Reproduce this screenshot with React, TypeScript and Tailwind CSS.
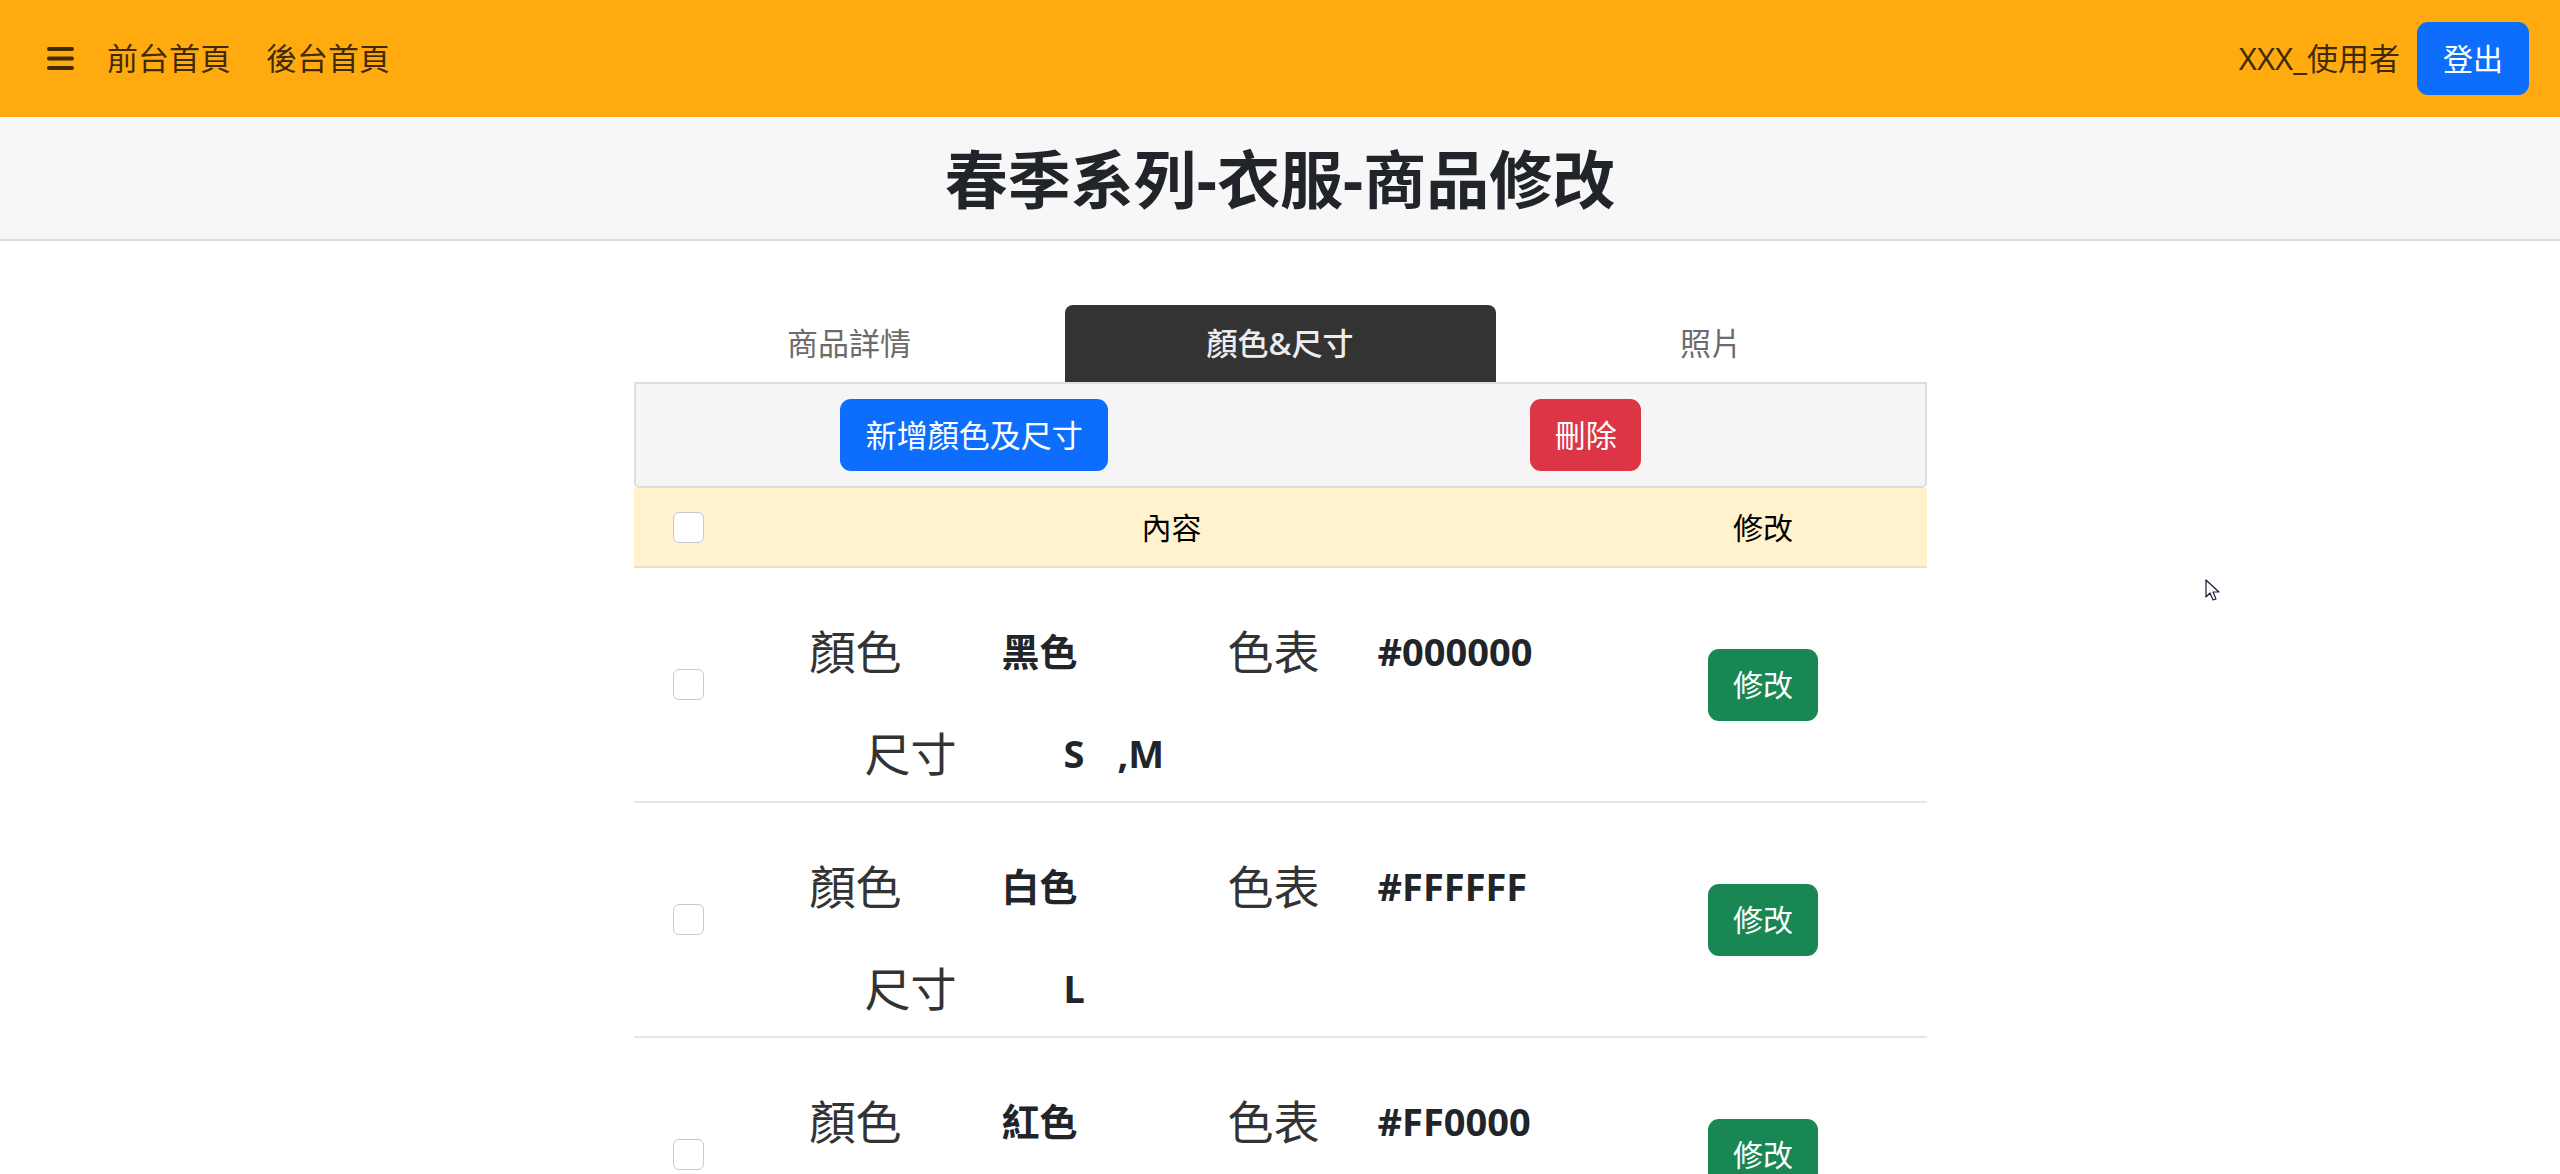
import React, { useState } from 'react';

type Variant = {
  id: number;
  name: string;
  hex: string;
  sizes: string[];
};

const variants: Variant[] = [
  { id: 1, name: '黑色', hex: '#000000', sizes: ['S', 'M'] },
  { id: 2, name: '白色', hex: '#FFFFFF', sizes: ['L'] },
  { id: 3, name: '紅色', hex: '#FF0000', sizes: ['M'] },
];

const tabs = ['商品詳情', '顏色&尺寸', '照片'];

const Checkbox: React.FC<{ checked: boolean; onChange: () => void }> = ({ checked, onChange }) => (
  <button
    type="button"
    onClick={onChange}
    className={`h-[31px] w-[31px] rounded-[6px] border ${
      checked ? 'border-[#0d6efd] bg-[#0d6efd]' : 'border-[#c9c9c9] bg-white'
    }`}
  />
);

const App: React.FC = () => {
  const [activeTab, setActiveTab] = useState(1);
  const [selected, setSelected] = useState<number[]>([]);

  const toggle = (id: number) => {
    setSelected((prev) => (prev.includes(id) ? prev.filter((x) => x !== id) : [...prev, id]));
  };

  const allChecked = selected.length === variants.length;

  return (
    <div className="relative min-h-screen bg-white font-['Noto_Sans','Noto_Sans_CJK_TC',sans-serif] text-[#212529]">
      {/* Navbar */}
      <header className="flex h-[117px] items-center justify-between bg-[#ffaa0e] pl-[47px] pr-[31px]">
        <div className="flex items-center">
          <svg width="27" height="23" viewBox="0 0 27 23" className="text-black/75">
            <rect x="0" y="0" width="27" height="4" rx="2" fill="currentColor" />
            <rect x="0" y="9.5" width="27" height="4" rx="2" fill="currentColor" />
            <rect x="0" y="19" width="27" height="4" rx="2" fill="currentColor" />
          </svg>
          <a className="ml-[33px] text-[31px] text-black/75">前台首頁</a>
          <a className="ml-[35px] text-[31px] text-black/75">後台首頁</a>
        </div>
        <div className="flex items-center">
          <span className="text-[31px] text-black/75">XXX_使用者</span>
          <button
            type="button"
            className="ml-[17px] h-[73px] w-[112px] rounded-[11px] bg-[#0d6efd] text-[30px] text-white"
          >
            登出
          </button>
        </div>
      </header>

      {/* Page title */}
      <div className="flex h-[124px] items-center justify-center border-b-2 border-[#dcdcdc] bg-[#f7f7f7]">
        <h1 className="text-[63px] font-bold leading-none text-[#212529]">春季系列-衣服-商品修改</h1>
      </div>

      <main className="mx-auto mt-[64px] w-[1293px]">
        {/* Tabs */}
        <div className="grid h-[77px] grid-cols-3">
          {tabs.map((t, i) => (
            <button
              key={t}
              type="button"
              onClick={() => setActiveTab(i)}
              className={`flex items-center justify-center rounded-t-[8px] text-[31px] ${
                activeTab === i ? 'bg-[#333333] font-medium text-[#ededed]' : 'text-[#6b6b6b]'
              }`}
            >
              {t}
            </button>
          ))}
        </div>

        {/* Toolbar */}
        <div className="grid h-[106px] grid-cols-2 items-center rounded-b-[5px] border-2 border-[#dedede] bg-[#f5f5f5] px-[33px]">
          <div className="flex justify-center">
            <button
              type="button"
              className="h-[72px] w-[268px] rounded-[11px] bg-[#0d6efd] text-[31px] text-white"
            >
              新增顏色及尺寸
            </button>
          </div>
          <div className="flex justify-center">
            <button
              type="button"
              className="h-[72px] w-[111px] rounded-[11px] bg-[#dc3545] text-[31px] text-white"
            >
              刪除
            </button>
          </div>
        </div>

        {/* Table head */}
        <div className="grid h-[80px] grid-cols-[110px_856px_327px] items-center border-b-2 border-[#e8e0c8] bg-[#fff2cc] text-[30px] text-black">
          <div className="flex justify-center">
            <Checkbox
              checked={allChecked}
              onChange={() => setSelected(allChecked ? [] : variants.map((v) => v.id))}
            />
          </div>
          <div className="text-center">內容</div>
          <div className="text-center">修改</div>
        </div>

        {/* Rows */}
        {variants.map((v) => (
          <div
            key={v.id}
            className="grid h-[235px] grid-cols-[110px_856px_327px] items-center border-b-2 border-[#e6e6e6]"
          >
            <div className="flex justify-center">
              <Checkbox checked={selected.includes(v.id)} onChange={() => toggle(v.id)} />
            </div>
            <div className="flex h-full flex-col pt-[53px] text-[#333]">
              <div className="flex h-[60px] items-center pl-[66px]">
                <span className="w-[192px] text-[46px]">顏色</span>
                <span className="w-[226px] text-[38px] font-bold text-[#212529]">{v.name}</span>
                <span className="w-[150px] text-[46px]">色表</span>
                <span className="text-[38px] font-bold text-[#212529]">{v.hex}</span>
              </div>
              <div className="mt-[42px] flex h-[60px] items-center pl-[121px]">
                <span className="w-[199px] text-[46px]">尺寸</span>
                {v.sizes.map((s, i) => (
                  <span
                    key={s}
                    className={`text-[38px] font-bold text-[#212529] ${i > 0 ? 'ml-[33px]' : ''}`}
                  >
                    {i > 0 ? `,${s}` : s}
                  </span>
                ))}
              </div>
            </div>
            <div className="flex justify-center">
              <button
                type="button"
                className="h-[72px] w-[110px] rounded-[11px] bg-[#198754] text-[30px] text-white"
              >
                修改
              </button>
            </div>
          </div>
        ))}
      </main>

      {/* mouse pointer from the capture */}
      <svg
        width="16"
        height="24"
        viewBox="0 0 16 24"
        className="pointer-events-none absolute left-[2205px] top-[579px]"
      >
        <path
          d="M1 1 L1 18 L5 14 L8 21 L11 20 L8 13 L14 13 Z"
          fill="white"
          stroke="#1a1a3a"
          strokeWidth="1.2"
          strokeLinejoin="round"
        />
      </svg>
    </div>
  );
};

export default App;
